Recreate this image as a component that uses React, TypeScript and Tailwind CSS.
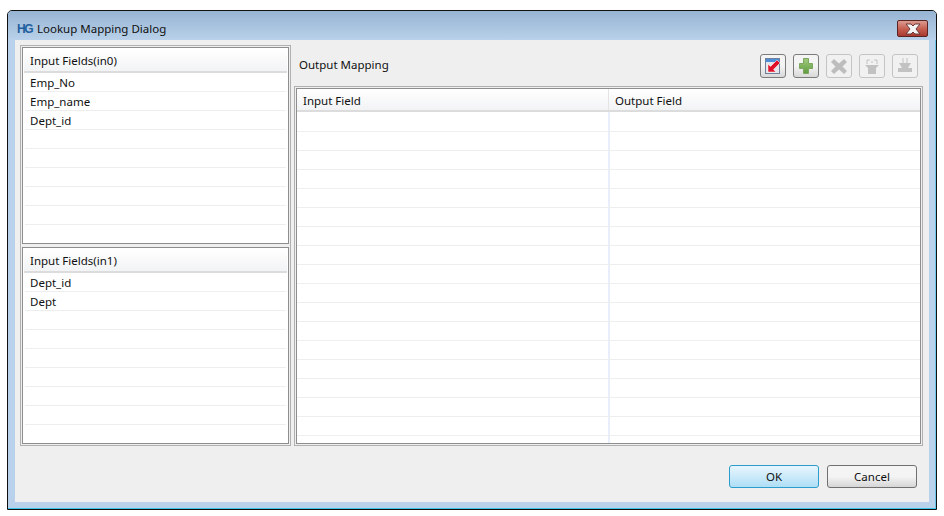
const fieldRows = (names: string[], total: number) =>
  Array.from({ length: total }, (_, i) => names[i] ?? '');

function FieldPanel({ title, names }: { title: string; names: string[] }) {
  return (
    <div className="h-[197px] border border-[#8e8e8e] bg-white">
      <div className="h-[25px] pt-[1px]">
        <div className="h-[24px] mx-[1px] pl-[6px] pt-[3px] leading-[18px] border-b-2 border-[#dcdcdc] bg-gradient-to-b from-white to-[#f2f3f5]">
          {title}
        </div>
      </div>
      {fieldRows(names, 8).map((name, i) => (
        <div key={i} className="h-[19px] mx-[2px] pl-[5px] leading-[19px] border-b border-[#eeeeee]">
          {name}
        </div>
      ))}
    </div>
  );
}

function ToolButton({ disabled, children }: { disabled?: boolean; children: React.ReactNode }) {
  return (
    <div
      className={`w-[26px] h-[24px] rounded-[3px] border flex items-center justify-center ${
        disabled
          ? 'border-[#c4c4c4] bg-[#f1f1f1]'
          : 'border-[#7c7c7c] bg-gradient-to-b from-[#f4f4f4] from-50% to-[#d8d8d8]'
      }`}
    >
      {children}
    </div>
  );
}

export default function App() {
  return (
    <div className="w-[944px] h-[516px] bg-white pt-[10px] pl-[7px] text-[11.5px] text-[#101010] font-['Noto_Sans','Open_Sans',sans-serif]">
      {/* Window frame */}
      <div className="w-[930px] h-[500px] border border-[#101010] rounded-t-[5px] bg-[#b9d1ea] shadow-[inset_-1px_0_0_#6cc4e8] flex flex-col overflow-hidden">
        {/* Title bar */}
        <div className="h-[29px] shrink-0 bg-gradient-to-b from-[#97b4d3] to-[#b9d1ea] flex items-center pt-[6px] pl-[9px] pr-[8px]">
          <span className="font-bold text-[12px] tracking-[-1.5px] text-[#1f5f9e] w-[20px] font-['Liberation_Sans',sans-serif]">HG</span>
          <span>Lookup Mapping Dialog</span>
          <div className="ml-auto w-[31px] h-[17px] rounded-[2px] border border-[#5a2424] bg-gradient-to-b from-[#dc9a90] via-[#c45c4e] via-55% to-[#a83a30] flex items-center justify-center">
            <svg width="18" height="12" viewBox="0 0 18 12">
              <path d="M2 1h5l2 2 2-2h5l-4 5 4 5h-5L9 9l-2 2H2l4-5z" fill="#f4f4f4" stroke="#6d3b3b" strokeWidth="1" />
            </svg>
          </div>
        </div>

        {/* Client area */}
        <div className="mx-[7px] h-[462px] bg-[#efefef] pt-[5px] pl-[5px] pr-[6px] flex flex-col">
          <div className="grid grid-cols-[271px_629px] gap-[3px] h-[401px]">
            {/* Left group */}
            <div className="border border-[#b0b0b0] p-[1px] flex flex-col gap-[3px]">
              <FieldPanel title="Input Fields(in0)" names={['Emp_No', 'Emp_name', 'Dept_id']} />
              <FieldPanel title="Input Fields(in1)" names={['Dept_id', 'Dept']} />
            </div>

            {/* Right group */}
            <div className="flex flex-col">
              <div className="h-[41px] flex items-center pl-[5px] pr-[5px]">
                <span className="-mt-[1px]">Output Mapping</span>
                <div className="ml-auto flex gap-[7px] mt-[1px]">
                  <ToolButton>
                    <svg width="18" height="18" viewBox="0 0 18 18">
                      <rect x="1.5" y="1.5" width="14" height="15" fill="#e6e6ea" stroke="#6f7f9c" />
                      <rect x="2" y="2" width="13" height="3" fill="#4d8ed8" />
                      <path d="M4 7v8h8l-2.5-2.5L16 6l-3-3-6.5 6.5z" fill="#e0102a" stroke="#ffffff" strokeWidth="0.5" />
                    </svg>
                  </ToolButton>
                  <ToolButton>
                    <svg width="18" height="18" viewBox="0 0 18 18">
                      <defs>
                        <linearGradient id="plusFill" x1="0" y1="0" x2="0" y2="1">
                          <stop offset="0" stopColor="#a2cc80" />
                          <stop offset="1" stopColor="#5f9a3e" />
                        </linearGradient>
                      </defs>
                      <path d="M6.5 1.5h5v5h4v5h-4v5h-5v-5h-4v-5h4z" fill="url(#plusFill)" stroke="#7ba65e" />
                    </svg>
                  </ToolButton>
                  <ToolButton disabled>
                    <svg width="18" height="18" viewBox="0 0 18 18">
                      <path d="M4 2l5 4.5L14 2l3 3-4.5 4.5L17 14l-3 3-5-4.5L4 17l-3-3 4.5-4.5L1 5z" fill="#bdbdbd" />
                    </svg>
                  </ToolButton>
                  <ToolButton disabled>
                    <svg width="18" height="18" viewBox="0 0 18 18">
                      <path d="M2 8h14l-3 3v6H5v-6z" fill="#c2c2c2" />
                      <path d="M4 7V3h3M14 7V3h-3M8 5h2" fill="none" stroke="#c2c2c2" />
                    </svg>
                  </ToolButton>
                  <ToolButton disabled>
                    <svg width="18" height="18" viewBox="0 0 18 18">
                      <path d="M3 6h12l-3 5h4v4H2v-4h4z" fill="#c2c2c2" />
                      <path d="M7 1v5M11 1v5" fill="none" stroke="#c2c2c2" />
                    </svg>
                  </ToolButton>
                </div>
              </div>

              {/* Output table */}
              <div className="h-[360px] border border-[#b0b0b0] p-[1px]">
                <div className="h-full border border-[#8e8e8e] bg-white overflow-hidden">
                  <div className="h-[23px] flex border-b-2 border-[#dcdcdc] bg-gradient-to-b from-white to-[#f2f3f5] leading-[24px]">
                    <div className="w-[312px] pl-[6px] border-r border-[#e4e4e4]">Input Field</div>
                    <div className="pl-[6px]">Output Field</div>
                  </div>
                  {Array.from({ length: 18 }, (_, i) => (
                    <div key={i} className={`flex border-b border-[#eeeeee] ${i === 0 ? 'h-[20px]' : 'h-[19px]'}`}>
                      <div className="w-[313px] border-r-2 border-[#e8eefa]" />
                    </div>
                  ))}
                </div>
              </div>
            </div>
          </div>

          {/* Dialog buttons */}
          <div className="flex justify-end gap-[8px] mt-[19px] pr-[6px]">
            <button className="w-[90px] h-[23px] rounded-[3px] border border-[#2c9ccc] bg-gradient-to-b from-[#e8f6fd] to-[#aedef6] leading-[20px]">
              OK
            </button>
            <button className="w-[90px] h-[23px] rounded-[3px] border border-[#707070] bg-gradient-to-b from-[#f4f4f4] from-50% to-[#d6d6d6] leading-[20px]">
              Cancel
            </button>
          </div>
        </div>

        <div className="mt-auto h-[1px] bg-[#3cc4e8]" />
      </div>
    </div>
  );
}
